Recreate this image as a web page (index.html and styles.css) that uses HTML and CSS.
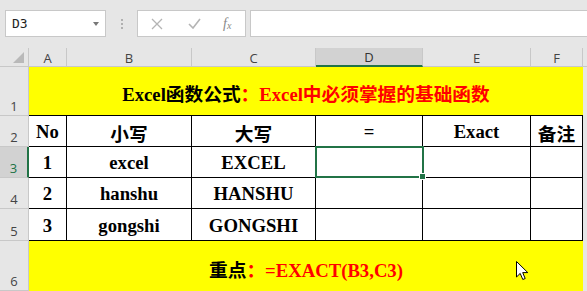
FILE: index.html
```html
<!DOCTYPE html>
<html>
<head>
<meta charset="utf-8">
<link rel="stylesheet" href="styles.css">
</head>
<body>
<div class="app">
  <div class="toolbar">
    <div class="namebox"><span class="name">D3</span><span class="drop"></span></div>
    <div class="grip"><i></i><i></i><i></i></div>
    <div class="btns">
      <svg class="ico" width="12" height="12" viewBox="0 0 12 12"><path d="M1 1L11 11M11 1L1 11" stroke="#b4b4b4" stroke-width="1.3" fill="none"/></svg>
      <svg class="ico" width="13" height="11" viewBox="0 0 13 11"><path d="M1 6L5 10L12 1" stroke="#b4b4b4" stroke-width="1.6" fill="none"/></svg>
      <span class="fx">f<sub>x</sub></span>
    </div>
    <div class="formula"></div>
  </div>
  <div class="sheet">
    <div class="corner"><span class="tri"></span></div>
    <div class="ch">A</div>
    <div class="ch">B</div>
    <div class="ch">C</div>
    <div class="ch sel">D</div>
    <div class="ch">E</div>
    <div class="ch">F</div>
    <div class="ch end"></div>

    <div class="rh">1</div>
    <div class="title"><span class="blk">Excel函数公式</span><span class="red">：Excel中必须掌握的基础函数</span></div>
    <div class="gap"></div>

    <div class="rh">2</div>
    <div class="c">No</div>
    <div class="c">小写</div>
    <div class="c">大写</div>
    <div class="c">=</div>
    <div class="c">Exact</div>
    <div class="c">备注</div>
    <div class="gap"></div>

    <div class="rh rsel">3</div>
    <div class="c">1</div>
    <div class="c">excel</div>
    <div class="c">EXCEL</div>
    <div class="c active"><span class="handle"></span></div>
    <div class="c"></div>
    <div class="c"></div>
    <div class="gap"></div>

    <div class="rh">4</div>
    <div class="c">2</div>
    <div class="c">hanshu</div>
    <div class="c">HANSHU</div>
    <div class="c"></div>
    <div class="c"></div>
    <div class="c"></div>
    <div class="gap"></div>

    <div class="rh">5</div>
    <div class="c">3</div>
    <div class="c">gongshi</div>
    <div class="c">GONGSHI</div>
    <div class="c"></div>
    <div class="c"></div>
    <div class="c"></div>
    <div class="gap"></div>

    <div class="rh">6</div>
    <div class="note"><span class="blk">重点</span><span class="red">：=EXACT(B3,C3)</span></div>
    <div class="gap"></div>
  </div>
  <svg class="cursor" width="13" height="20" viewBox="0 0 13 20"><path d="M0.5 0.5L0.5 16L4.2 12.4L6.8 18.5L9.2 17.5L6.7 11.6L11.8 11.6Z" fill="#fff" stroke="#000" stroke-width="1" stroke-linejoin="round"/></svg>
</div>
</body>
</html>
```

FILE: styles.css
```css
html, body {
  margin: 0;
  padding: 0;
  background: #e6e6e6;
}
.app {
  position: relative;
  width: 587px;
  height: 291px;
  overflow: hidden;
  background: #e6e6e6;
}
.toolbar {
  height: 48px;
  display: flex;
  align-items: flex-start;
  padding-top: 10px;
  box-sizing: border-box;
}
.namebox {
  margin-left: 5px;
  width: 101px;
  height: 27px;
  box-sizing: border-box;
  background: #fff;
  border: 1px solid #c8c8c8;
  display: flex;
  align-items: center;
  justify-content: space-between;
  padding: 0 6px 0 6px;
}
.name {
  font-family: "DejaVu Sans Mono", "Liberation Mono", monospace;
  font-size: 13px;
  color: #222;
}
.drop {
  width: 0;
  height: 0;
  border-left: 3.5px solid transparent;
  border-right: 3.5px solid transparent;
  border-top: 4px solid #777;
}
.grip {
  width: 31px;
  height: 27px;
  display: flex;
  flex-direction: column;
  align-items: center;
  justify-content: center;
  gap: 2px;
}
.grip i {
  display: block;
  width: 2px;
  height: 2px;
  background: #b0b0b0;
}
.btns {
  width: 109px;
  height: 27px;
  box-sizing: border-box;
  background: #fff;
  border: 1px solid #c8c8c8;
  display: flex;
  align-items: center;
  padding-left: 13px;
}
.btns .ico:first-child {
  margin-right: 25px;
}
.btns .ico:nth-child(2) {
  margin-right: 22px;
}
.fx {
  font-family: "Liberation Serif", serif;
  font-style: italic;
  font-size: 14px;
  color: #888;
}
.fx sub {
  font-size: 10px;
  vertical-align: -1px;
}
.formula {
  margin-left: 4px;
  flex: 1;
  height: 27px;
  box-sizing: border-box;
  background: #fff;
  border-top: 1px solid #c8c8c8;
  border-bottom: 1px solid #c8c8c8;
  border-left: 1px solid #c8c8c8;
}
.sheet {
  display: grid;
  grid-template-columns: 29px 38px 125px 124px 107px 108px 52px 4px;
  grid-template-rows: 19px 49px 31px 31px 31px 32px 50px;
}
.corner {
  background: #e6e6e6;
  border-right: 1px solid #c8c8c8;
  border-bottom: 1px solid #c8c8c8;
  box-sizing: border-box;
  position: relative;
}
.tri {
  position: absolute;
  right: 4px;
  bottom: 3px;
  width: 0;
  height: 0;
  border-left: 11px solid transparent;
  border-bottom: 11px solid #b9b9b9;
}
.ch {
  background: #e6e6e6;
  border-right: 1px solid #c8c8c8;
  border-bottom: 1px solid #c8c8c8;
  box-sizing: border-box;
  display: flex;
  align-items: center;
  justify-content: center;
  font-family: "Open Sans", "Noto Sans", sans-serif;
  font-size: 13px;
  color: #444;
  padding-top: 1px;
}
.ch.sel {
  background: #d2d2d2;
  border-bottom: 2px solid #217346;
  color: #333;
}
.ch.end {
  border-right: none;
}
.rh {
  background: #e6e6e6;
  border-right: 1px solid #c8c8c8;
  border-bottom: 1px solid #c8c8c8;
  box-sizing: border-box;
  display: flex;
  align-items: flex-end;
  justify-content: center;
  font-family: "Open Sans", "Noto Sans", sans-serif;
  font-size: 13px;
  line-height: 16px;
  color: #444;
  padding-bottom: 1px;
}
.rh.rsel {
  background: #d2d2d2;
  border-right: 2px solid #217346;
  color: #217346;
}
.title, .note {
  grid-column: 2 / 8;
  background: #ffff00;
  border-bottom: 1px solid #000;
  box-sizing: border-box;
  display: flex;
  align-items: center;
  justify-content: center;
  font-family: "Liberation Serif", "Noto Sans CJK SC", serif;
  font-weight: bold;
  font-size: 18.7px;
  white-space: nowrap;
}
.title {
  padding-top: 2px;
}
.note {
  border-bottom: none;
  padding-top: 4px;
}
.blk {
  color: #000;
}
.red {
  color: #f00;
}
.gap {
  background: #e6e6e6;
}
.c {
  background: #fff;
  border-right: 1px solid #000;
  border-bottom: 1px solid #000;
  box-sizing: border-box;
  display: flex;
  align-items: center;
  justify-content: center;
  font-family: "Liberation Serif", "Noto Sans CJK SC", serif;
  font-weight: bold;
  font-size: 18.7px;
  color: #000;
  white-space: nowrap;
  padding-top: 2px;
}
.c.active {
  position: relative;
  border: 2px solid #217346;
  margin: -1px -1px 0 -1px;
}
.handle {
  position: absolute;
  right: -4px;
  bottom: -4px;
  width: 5px;
  height: 5px;
  background: #217346;
  border: 1px solid #fff;
  z-index: 2;
}
.cursor {
  position: absolute;
  left: 516px;
  top: 261px;
}
```
